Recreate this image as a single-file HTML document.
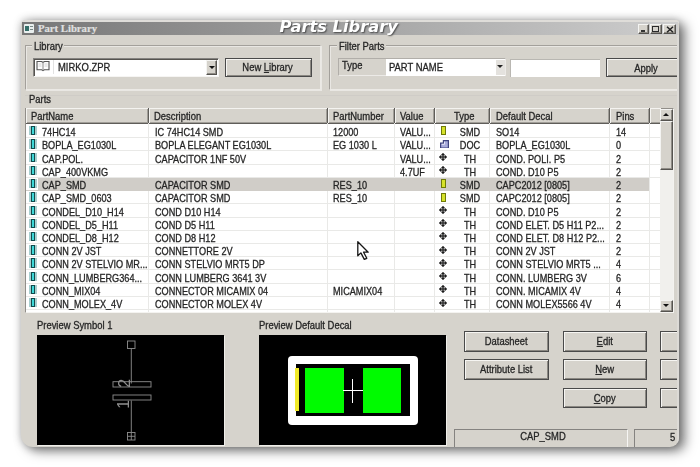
<!DOCTYPE html>
<html>
<head>
<meta charset="utf-8">
<title>Parts Library</title>
<style>
html,body{margin:0;padding:0;}
body{width:700px;height:467px;overflow:hidden;background:#fff;font-family:"Liberation Sans",sans-serif;font-size:10.3px;color:#222;-webkit-text-stroke:.3px #2a2a2a;position:relative;}
#win{position:absolute;left:21px;top:20px;width:658px;height:427px;background:#d6d3cc;border-radius:5px 3px 9px 12px;overflow:hidden;box-shadow:6px 4px 12px 0 rgba(0,0,0,.5),0 0 9px 0 rgba(0,0,0,.26);}
#c{position:absolute;left:-21px;top:-20px;width:700px;height:467px;filter:blur(.5px);}
#tb{position:absolute;left:22px;top:22.300px;width:656px;height:12.400px;background:linear-gradient(90deg,#777 0%,#cecece 100%);}
.a{position:absolute;white-space:nowrap;}
.x{position:absolute;white-space:nowrap;margin-top:-.7px;transform:scaleX(.915);transform-origin:0 50%;line-height:13px;}
.xc{position:absolute;white-space:nowrap;margin-top:-.5px;transform:scaleX(.915);transform-origin:50% 50%;line-height:13px;text-align:center;}
.gb{position:absolute;box-sizing:border-box;border:1px solid #ebe9e5;border-top-color:#a3a09b;border-left-color:#a3a09b;box-shadow:inset 1px 1px 0 #e9e7e3, 1px 1px 0 #e9e7e3;}
.gl{position:absolute;background:#d6d3cc;height:10px;}
.btn{position:absolute;box-sizing:border-box;border:1px solid #4a4a4a;box-shadow:inset 1px 1px 0 #f6f5f2,inset -1px -1px 0 #8b8882,inset 2px 2px 0 #d6d3cc,inset -2px -2px 0 #d6d3cc;background:#d6d3cc;}
.cb{position:absolute;box-sizing:border-box;border:1px solid #55534f;border-top-color:#f4f4f2;border-left-color:#f4f4f2;box-shadow:inset -1px -1px 0 #8f8c86;background:#d6d3cc;}
.sunk{position:absolute;box-sizing:border-box;border:1px solid #f6f5f3;border-top-color:#858380;border-left-color:#858380;}
.hd{position:absolute;top:108px;height:15.500px;box-sizing:border-box;background:#d6d3cc;border-right:1px solid #5f5d59;border-bottom:1px solid #5f5d59;box-shadow:inset 1px 1px 0 #f4f3f0,inset -1px -1px 0 #a19e98;}
.r{position:absolute;left:26px;width:635px;height:13.250px;box-sizing:border-box;border-bottom:1px solid #e9e9e7;}
.r.sel{background:linear-gradient(90deg,#fff 0,#fff 12.500px,#d0cdc8 12.500px);width:623px;border-bottom-color:#d0cdc8;}
.r span{position:absolute;top:1.300px;margin-left:-26px;white-space:nowrap;transform:scaleX(.888);transform-origin:0 50%;line-height:13px;}
.r span.ty{left:449.700px;width:40px;text-align:center;transform-origin:50% 50%;}
.vl{position:absolute;top:123px;width:1px;height:189px;background:#e9e9e7;}
.ic{position:absolute;left:4.500px;top:1.300px;width:4.700px;height:9.300px;box-sizing:border-box;border:solid #124a4c;border-width:.6px 1.600px 1px;background:#3fd8d8;box-shadow:-2px 0 0 #a9cfcf,2px 0 0 #a9cfcf;}
.smd{position:absolute;left:415.200px;top:1.600px;width:5px;height:9px;box-sizing:border-box;border:1.300px solid #6f7a08;background:#d6e22a;}
.doc{position:absolute;left:413.800px;top:1.500px;width:9px;height:8.700px;}
.th{position:absolute;left:413px;top:1.700px;width:8px;height:8px;}
u{text-decoration:underline;}
</style>
</head>
<body>
<div id="win"><div id="c">
  <div class="a" style="left:21px;top:20px;width:658px;height:3px;background:#dfddd9"></div>
  <div id="tb"></div>
  <!-- title icon -->
  <div class="a" style="left:23.500px;top:24px;width:10.500px;height:8.500px;background:#e9efee;border-radius:1px;"></div>
  <div class="a" style="left:25px;top:25.500px;width:4px;height:5.500px;background:#356e68;"></div>
  <div class="a" style="left:30px;top:26px;width:3px;height:1px;background:#7a8a88;"></div>
  <div class="a" style="left:30px;top:28.500px;width:3px;height:1px;background:#7a8a88;"></div>
  <div class="x" style="left:38px;top:23px;font:bold 11px/13px 'Liberation Serif',serif;color:#e0e0e0;-webkit-text-stroke:.2px #e0e0e0;transform:scaleX(.97)">Part Library</div>
  <!-- caption buttons -->
  <div class="cb" style="left:638px;top:24px;width:11px;height:9.500px;"></div>
  <div class="a" style="left:641px;top:30px;width:4px;height:1.500px;background:#333"></div>
  <div class="cb" style="left:650px;top:24px;width:11.500px;height:9.500px;"></div>
  <div class="a" style="left:652px;top:25.500px;width:7px;height:6px;box-sizing:border-box;border:1px solid #2a2a2a;border-top-width:1.500px"></div>
  <div class="cb" style="left:663px;top:24px;width:13px;height:9.500px;"></div>
  <svg class="a" style="left:665.500px;top:25.500px" width="8" height="7" viewBox="0 0 8 7"><path d="M1 .7L7 6.300M7 .7L1 6.300" stroke="#222" stroke-width="1.500" fill="none"/></svg>

  <!-- Library group -->
  <div class="gb" style="left:24.500px;top:45.300px;width:296px;height:44.500px;"></div>
  <div class="gl" style="left:32px;top:42px;width:32px;"></div>
  <div class="x" style="left:34px;top:40.500px;">Library</div>
  <div class="sunk" style="left:32.500px;top:57.500px;width:186.500px;height:19.500px;background:#fff;box-shadow:inset 1px 1px 0 #55534f;"></div>
  <svg class="a" style="left:36px;top:60px" width="14" height="12" viewBox="0 0 14 12"><path d="M1 1.500h4.500l1.500 .8l1.500 -.8h4.500v8.300h-4.700l-1.300 .9l-1.300 -.9h-4.700z" fill="#fdfdfd" stroke="#555" stroke-width="1.100"/><path d="M7 2.300v8.300" stroke="#8a8a8a" stroke-width="1"/><path d="M2.500 4h3M2.500 6h3M8.500 4h3M8.500 6h3" stroke="#c9c9c9" stroke-width=".8"/></svg>
  <div class="a" style="left:53px;top:60px;width:1px;height:14px;background:#e2e2e2"></div>
  <div class="x" style="left:57.500px;top:61.500px;">MIRKO.ZPR</div>
  <div class="cb" style="left:206px;top:60px;width:11px;height:15px;"></div>
  <div class="a" style="left:208.500px;top:66px;width:0;height:0;border:3px solid transparent;border-top:3.500px solid #111;border-bottom:0"></div>
  <div class="btn" style="left:224.500px;top:57.500px;width:87px;height:19.500px;"></div>
  <div class="xc" style="left:224px;top:61.700px;width:87px;">New <u>L</u>ibrary</div>

  <!-- Filter group -->
  <div class="gb" style="left:328.500px;top:45.300px;width:360px;height:44.500px;"></div>
  <div class="gl" style="left:337px;top:42px;width:49px;"></div>
  <div class="x" style="left:339px;top:40.500px;">Filter Parts</div>
  <div class="sunk" style="left:338px;top:58px;width:168px;height:18px;border-color:#b1aea9 #eceae7 #eceae7 #b1aea9"></div>
  <div class="x" style="left:341.500px;top:59.500px;">Type</div>
  <div class="a" style="left:386px;top:58.500px;width:118.500px;height:17px;background:#fff;"></div>
  <div class="x" style="left:388.500px;top:61.300px;">PART NAME</div>
  <div class="a" style="left:495.500px;top:59.500px;width:9px;height:15px;background:#e4e2de;"></div>
  <div class="a" style="left:496.500px;top:64.500px;width:0;height:0;border:3px solid transparent;border-top:3.500px solid #222;border-bottom:0"></div>
  <div class="a" style="left:509.500px;top:58.500px;width:90.500px;height:18px;background:#fff;border-top:1px solid #b9b7b2;border-left:1px solid #b9b7b2;box-sizing:border-box"></div>
  <div class="btn" style="left:606px;top:58px;width:90px;height:19px;"></div>
  <div class="xc" style="left:616px;top:62.500px;width:60px;">Apply</div>
  <div class="a" style="left:25px;top:94.500px;width:652px;height:1px;background:#cfccc7"></div>

  <div class="x" style="left:29px;top:93.700px;">Parts</div>

  <!-- List -->
  <div class="a" style="left:25px;top:108px;width:648.500px;height:204.500px;background:#fff;box-sizing:border-box;border:1px solid #918e89;border-right-color:#f4f3f0;border-bottom-color:#f4f3f0;"></div>
  <div class="hd" style="left:26px;width:123px;"></div><div class="x" style="left:31px;top:110.500px">PartName</div>
  <div class="hd" style="left:149px;width:179px;"></div><div class="x" style="left:153.500px;top:110.500px">Description</div>
  <div class="hd" style="left:328px;width:66.500px;"></div><div class="x" style="left:333px;top:110.500px">PartNumber</div>
  <div class="hd" style="left:394.500px;width:40.500px;"></div><div class="x" style="left:400px;top:110.500px">Value</div>
  <div class="hd" style="left:435px;width:54.500px;"></div><div class="x" style="left:453.500px;top:110.500px">Type</div>
  <div class="hd" style="left:489.500px;width:120.500px;"></div><div class="x" style="left:495.500px;top:110.500px">Default Decal</div>
  <div class="hd" style="left:610px;width:39.500px;"></div><div class="x" style="left:615.500px;top:110.500px">Pins</div>
  <div class="hd" style="left:649.500px;width:11px;border-right:0"></div>
  <div class="vl" style="left:148px"></div><div class="vl" style="left:327px"></div><div class="vl" style="left:393.500px"></div><div class="vl" style="left:434px"></div><div class="vl" style="left:488.500px"></div><div class="vl" style="left:609px"></div><div class="vl" style="left:648.500px"></div>
<div class="r" style="top:124.87px"><i class="ic"></i><span style="left:42px">74HC14</span><span style="left:155px">IC 74HC14 SMD</span><span style="left:333px">12000</span><span style="left:400px">VALU...</span><i class="smd"></i><span class="ty">SMD</span><span style="left:495.500px">SO14</span><span style="left:615.500px">14</span></div>
<div class="r" style="top:138.10px"><i class="ic"></i><span style="left:42px">BOPLA_EG1030L</span><span style="left:155px">BOPLA ELEGANT EG1030L</span><span style="left:333px">EG 1030 L</span><span style="left:400px">VALU...</span><svg class="doc" viewBox="0 0 9 8.700"><path d="M.6 3.200H3.400V.6H8.400V8.100H.6Z" fill="#a9acdc" stroke="#3f437e" stroke-width="1.200"/><path d="M1.700 4.300H4.500V1.700" fill="none" stroke="#e4e5f6" stroke-width="1"/></svg><span class="ty">DOC</span><span style="left:495.500px">BOPLA_EG1030L</span><span style="left:615.500px">0</span></div>
<div class="r" style="top:151.33px"><i class="ic"></i><span style="left:42px">CAP.POL.</span><span style="left:155px">CAPACITOR 1NF 50V</span><span style="left:400px">VALU...</span><svg class="th" viewBox="0 0 7 7"><path d="M3.5 0L5 1.800H4V3H5.200V2L7 3.500L5.200 5V4H4V5.200H5L3.500 7L2 5.200H3V4H1.800V5L0 3.500L1.800 2V3H3V1.800H2Z" fill="#1e1e1e" stroke="#1e1e1e" stroke-width=".35"/></svg><span class="ty">TH</span><span style="left:495.500px">COND. POLI. P5</span><span style="left:615.500px">2</span></div>
<div class="r" style="top:164.56px"><i class="ic"></i><span style="left:42px">CAP_400VKMG</span><span style="left:400px">4.7UF</span><svg class="th" viewBox="0 0 7 7"><path d="M3.5 0L5 1.800H4V3H5.200V2L7 3.500L5.200 5V4H4V5.200H5L3.500 7L2 5.200H3V4H1.800V5L0 3.500L1.800 2V3H3V1.800H2Z" fill="#1e1e1e" stroke="#1e1e1e" stroke-width=".35"/></svg><span class="ty">TH</span><span style="left:495.500px">COND. D10 P5</span><span style="left:615.500px">2</span></div>
<div class="r sel" style="top:177.79px"><i class="ic"></i><span style="left:42px">CAP_SMD</span><span style="left:155px">CAPACITOR SMD</span><span style="left:333px">RES_10</span><i class="smd"></i><span class="ty">SMD</span><span style="left:495.500px">CAPC2012 [0805]</span><span style="left:615.500px">2</span></div>
<div class="r" style="top:191.02px"><i class="ic"></i><span style="left:42px">CAP_SMD_0603</span><span style="left:155px">CAPACITOR SMD</span><span style="left:333px">RES_10</span><i class="smd"></i><span class="ty">SMD</span><span style="left:495.500px">CAPC2012 [0805]</span><span style="left:615.500px">2</span></div>
<div class="r" style="top:204.25px"><i class="ic"></i><span style="left:42px">CONDEL_D10_H14</span><span style="left:155px">COND D10 H14</span><svg class="th" viewBox="0 0 7 7"><path d="M3.5 0L5 1.800H4V3H5.200V2L7 3.500L5.200 5V4H4V5.200H5L3.500 7L2 5.200H3V4H1.800V5L0 3.500L1.800 2V3H3V1.800H2Z" fill="#1e1e1e" stroke="#1e1e1e" stroke-width=".35"/></svg><span class="ty">TH</span><span style="left:495.500px">COND. D10 P5</span><span style="left:615.500px">2</span></div>
<div class="r" style="top:217.48px"><i class="ic"></i><span style="left:42px">CONDEL_D5_H11</span><span style="left:155px">COND D5 H11</span><svg class="th" viewBox="0 0 7 7"><path d="M3.5 0L5 1.800H4V3H5.200V2L7 3.500L5.200 5V4H4V5.200H5L3.500 7L2 5.200H3V4H1.800V5L0 3.500L1.800 2V3H3V1.800H2Z" fill="#1e1e1e" stroke="#1e1e1e" stroke-width=".35"/></svg><span class="ty">TH</span><span style="left:495.500px">COND ELET. D5 H11 P2...</span><span style="left:615.500px">2</span></div>
<div class="r" style="top:230.71px"><i class="ic"></i><span style="left:42px">CONDEL_D8_H12</span><span style="left:155px">COND D8 H12</span><svg class="th" viewBox="0 0 7 7"><path d="M3.5 0L5 1.800H4V3H5.200V2L7 3.500L5.200 5V4H4V5.200H5L3.500 7L2 5.200H3V4H1.800V5L0 3.500L1.800 2V3H3V1.800H2Z" fill="#1e1e1e" stroke="#1e1e1e" stroke-width=".35"/></svg><span class="ty">TH</span><span style="left:495.500px">COND ELET. D8 H12 P2...</span><span style="left:615.500px">2</span></div>
<div class="r" style="top:243.94px"><i class="ic"></i><span style="left:42px">CONN 2V JST</span><span style="left:155px">CONNETTORE 2V</span><svg class="th" viewBox="0 0 7 7"><path d="M3.5 0L5 1.800H4V3H5.200V2L7 3.500L5.200 5V4H4V5.200H5L3.500 7L2 5.200H3V4H1.800V5L0 3.500L1.800 2V3H3V1.800H2Z" fill="#1e1e1e" stroke="#1e1e1e" stroke-width=".35"/></svg><span class="ty">TH</span><span style="left:495.500px">CONN 2V JST</span><span style="left:615.500px">2</span></div>
<div class="r" style="top:257.17px"><i class="ic"></i><span style="left:42px">CONN 2V STELVIO MR...</span><span style="left:155px">CONN STELVIO MRT5 DP</span><svg class="th" viewBox="0 0 7 7"><path d="M3.5 0L5 1.800H4V3H5.200V2L7 3.500L5.200 5V4H4V5.200H5L3.500 7L2 5.200H3V4H1.800V5L0 3.500L1.800 2V3H3V1.800H2Z" fill="#1e1e1e" stroke="#1e1e1e" stroke-width=".35"/></svg><span class="ty">TH</span><span style="left:495.500px">CONN STELVIO MRT5 ...</span><span style="left:615.500px">4</span></div>
<div class="r" style="top:270.40px"><i class="ic"></i><span style="left:42px">CONN_LUMBERG364...</span><span style="left:155px">CONN LUMBERG 3641 3V</span><svg class="th" viewBox="0 0 7 7"><path d="M3.5 0L5 1.800H4V3H5.200V2L7 3.500L5.200 5V4H4V5.200H5L3.500 7L2 5.200H3V4H1.800V5L0 3.500L1.800 2V3H3V1.800H2Z" fill="#1e1e1e" stroke="#1e1e1e" stroke-width=".35"/></svg><span class="ty">TH</span><span style="left:495.500px">CONN. LUMBERG 3V</span><span style="left:615.500px">6</span></div>
<div class="r" style="top:283.63px"><i class="ic"></i><span style="left:42px">CONN_MIX04</span><span style="left:155px">CONNECTOR MICAMIX 04</span><span style="left:333px">MICAMIX04</span><svg class="th" viewBox="0 0 7 7"><path d="M3.5 0L5 1.800H4V3H5.200V2L7 3.500L5.200 5V4H4V5.200H5L3.500 7L2 5.200H3V4H1.800V5L0 3.500L1.800 2V3H3V1.800H2Z" fill="#1e1e1e" stroke="#1e1e1e" stroke-width=".35"/></svg><span class="ty">TH</span><span style="left:495.500px">CONN. MICAMIX 4V</span><span style="left:615.500px">4</span></div>
<div class="r" style="top:296.86px"><i class="ic"></i><span style="left:42px">CONN_MOLEX_4V</span><span style="left:155px">CONNECTOR MOLEX 4V</span><svg class="th" viewBox="0 0 7 7"><path d="M3.5 0L5 1.800H4V3H5.200V2L7 3.500L5.200 5V4H4V5.200H5L3.500 7L2 5.200H3V4H1.800V5L0 3.500L1.800 2V3H3V1.800H2Z" fill="#1e1e1e" stroke="#1e1e1e" stroke-width=".35"/></svg><span class="ty">TH</span><span style="left:495.500px">CONN MOLEX5566 4V</span><span style="left:615.500px">4</span></div>
  <svg class="a" style="left:357.300px;top:240.500px" width="13" height="20" viewBox="0 0 13 20"><path d="M.8 .8V14.800L3.900 11.900L7.300 18.400L9.800 17.300L6.600 11.200H11.200Z" fill="#fff" stroke="#151515" stroke-width="1.300" stroke-linejoin="round"/></svg>
  <!-- scrollbar -->
  <div class="a" style="left:660px;top:109px;width:12.500px;height:202.500px;background:#f1f0ed"></div>
  <div class="cb" style="left:660px;top:108.500px;width:12.500px;height:12px;"></div>
  <div class="a" style="left:663px;top:112.500px;width:0;height:0;border:3px solid transparent;border-bottom:3.500px solid #111;border-top:0"></div>
  <div class="cb" style="left:660px;top:120.500px;width:12.500px;height:49px;"></div>
  <div class="cb" style="left:660px;top:299.500px;width:12.500px;height:12px;"></div>
  <div class="a" style="left:663px;top:304px;width:0;height:0;border:3px solid transparent;border-top:3.500px solid #111;border-bottom:0"></div>

  <!-- Previews -->
  <div class="x" style="left:36.500px;top:320px;">Preview Symbol 1</div>
  <div class="a" style="left:36.500px;top:334.500px;width:187.500px;height:110px;background:#000;box-shadow:1px 1px 0 #efeeea;">
    <svg width="188" height="110" viewBox="36.500 334.500 188 110">
      <g stroke="#8f8f8f" stroke-width=".9" fill="none">
        <path d="M130.800 348v35M130.800 400v32"/>
        <rect x="112.500" y="381.200" width="38" height="5.300"/>
        <rect x="112.500" y="394.500" width="38" height="5"/>
        <rect x="127" y="340.500" width="7.500" height="7.500"/>
        <rect x="127" y="432" width="7.500" height="7.500"/>
        <path d="M127 435.800h7.500M130.800 432v7.500"/>
      </g>
      <text x="0" y="0" font-size="16" fill="#8e8e8e" font-family="Liberation Sans, sans-serif" transform="translate(129 387.300) rotate(-90)">2</text>
      <text x="0" y="0" font-size="16" fill="#8e8e8e" font-family="Liberation Sans, sans-serif" transform="translate(128.500 408.200) rotate(-90)">1</text>
    </svg>
  </div>
  <div class="x" style="left:259px;top:320px;">Preview Default Decal</div>
  <div class="a" style="left:258.500px;top:334.500px;width:187.500px;height:110px;background:#000;box-shadow:1px 1px 0 #efeeea;"></div>
  <div class="a" style="left:288px;top:356px;width:129.500px;height:68.500px;background:#fff;border-radius:4px"></div>
  <div class="a" style="left:296px;top:364px;width:114px;height:52px;background:#000;"></div>
  <div class="a" style="left:295px;top:367.500px;width:4px;height:43.500px;background:#f0ea2a;"></div>
  <div class="a" style="left:305px;top:367.500px;width:38.500px;height:45px;background:#00fb00;"></div>
  <div class="a" style="left:362.500px;top:367.500px;width:38.500px;height:45px;background:#00fb00;"></div>
  <div class="a" style="left:343px;top:389.500px;width:20px;height:1px;background:#fff;"></div>
  <div class="a" style="left:352px;top:378.500px;width:1px;height:24px;background:#fff;"></div>

  <!-- Buttons -->
  <div class="btn" style="left:464px;top:330.500px;width:84.500px;height:21.500px;"></div><div class="xc" style="left:464px;top:335.800px;width:84.500px;">Datasheet</div>
  <div class="btn" style="left:464px;top:358.500px;width:84.500px;height:21px;"></div><div class="xc" style="left:464px;top:363.800px;width:84.500px;">Attribute List</div>
  <div class="btn" style="left:563px;top:330.500px;width:83.500px;height:21.500px;"></div><div class="xc" style="left:563px;top:335.800px;width:83.500px;"><u>E</u>dit</div>
  <div class="btn" style="left:563px;top:358.500px;width:83.500px;height:21px;"></div><div class="xc" style="left:563px;top:363.800px;width:83.500px;"><u>N</u>ew</div>
  <div class="btn" style="left:563px;top:388px;width:83.500px;height:20px;"></div><div class="xc" style="left:563px;top:392.800px;width:83.500px;"><u>C</u>opy</div>
  <div class="btn" style="left:660px;top:330.500px;width:40px;height:21.500px;"></div>
  <div class="btn" style="left:660px;top:358.500px;width:40px;height:21px;"></div>
  <div class="btn" style="left:660px;top:388px;width:40px;height:20px;"></div>

  <!-- Status -->
  <div class="sunk" style="left:454px;top:428.500px;width:174px;height:19px;"></div>
  <div class="xc" style="left:456px;top:430.700px;width:174px;">CAP_SMD</div>
  <div class="sunk" style="left:634px;top:428.500px;width:60px;height:19px;"></div>
  <div class="x" style="left:669.500px;top:431.200px;">5</div>
  <!-- window right/left frame -->
  <div class="a" style="left:676.500px;top:35px;width:3px;height:412px;background:#dcdad6"></div>
</div></div>
<div class="a" id="ttl" style="left:279.500px;top:17.200px;font:italic bold 16.300px/20px 'DejaVu Sans','Liberation Sans',sans-serif;color:#fff;-webkit-text-stroke:0;text-shadow:1px 1px 1.500px rgba(40,40,40,.7);filter:blur(.4px);">Parts Library</div>
</body>
</html>
